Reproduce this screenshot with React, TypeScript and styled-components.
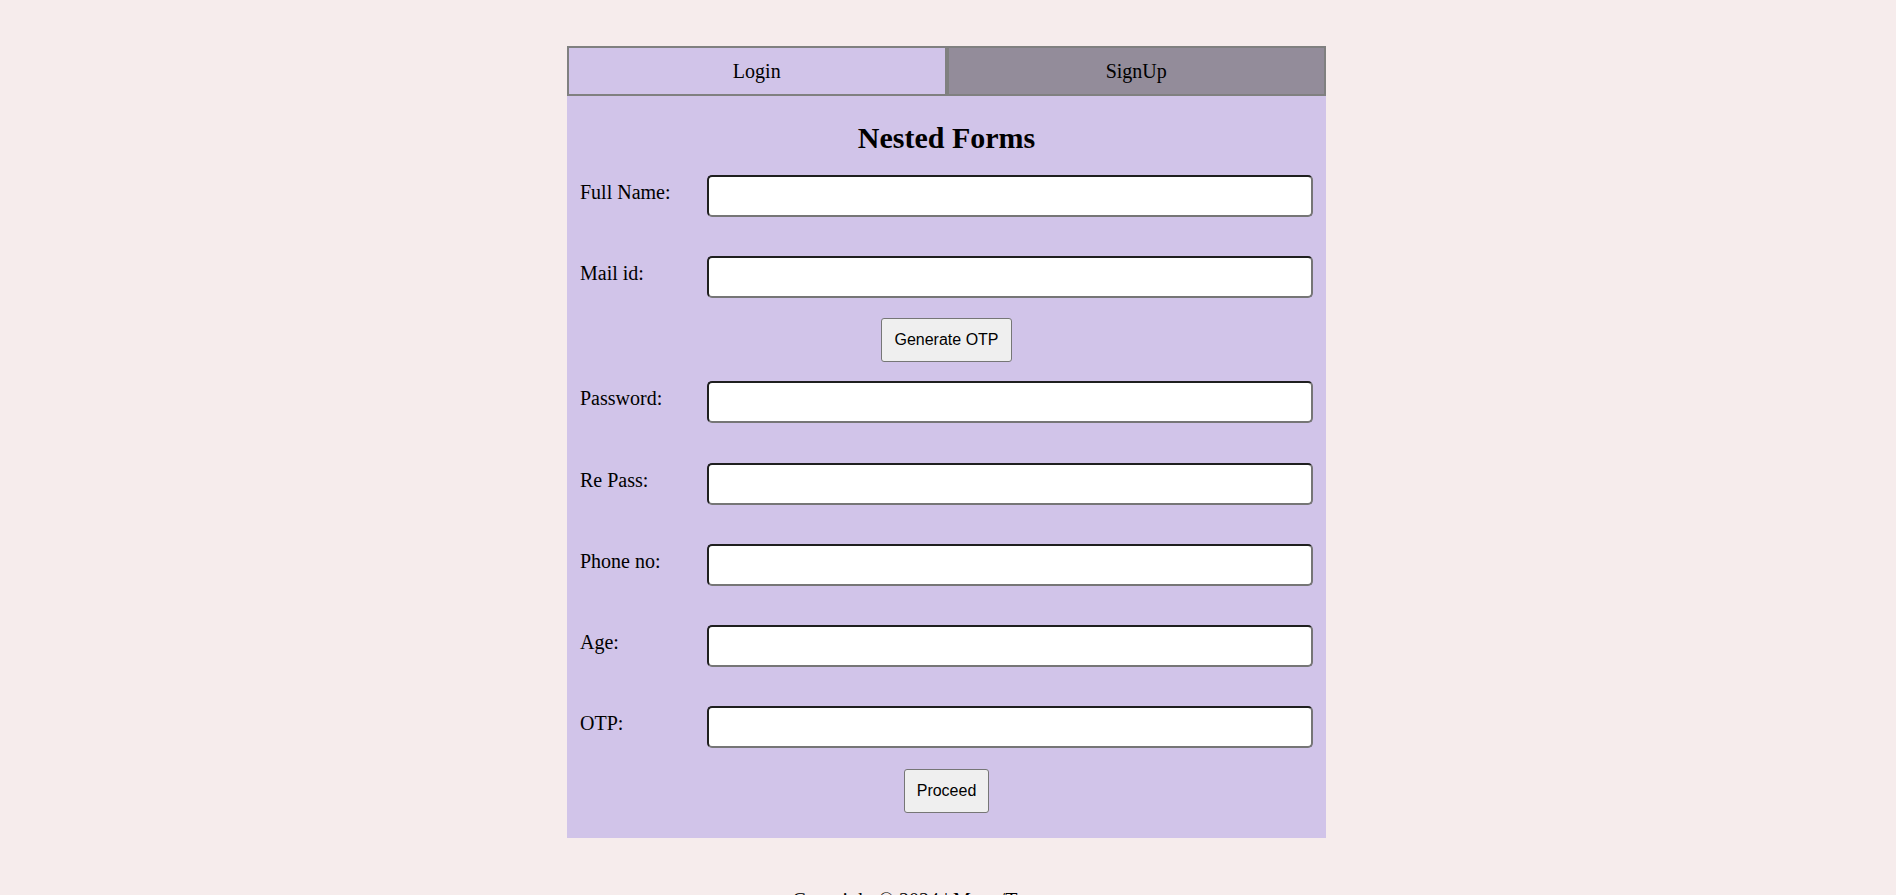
import React from "react";
import styled, { createGlobalStyle } from "styled-components";

const GlobalStyle = createGlobalStyle`
  html, body {
    margin: 0;
    padding: 0;
    background: #f6ecec;
    font-family: "Liberation Serif", "Times New Roman", serif;
    font-size: 20px;
    color: #000;
  }
`;

const Page = styled.div`
  display: flex;
  flex-direction: column;
  align-items: center;
  padding: 46px 3px 0 0;
  min-height: 849px;
`;

const Card = styled.div`
  width: 759px;
  background: #d1c4e9;
`;

const TabBar = styled.div`
  display: flex;
`;

const Tab = styled.button<{ $active?: boolean }>`
  flex: 1;
  height: 50px;
  box-sizing: border-box;
  border: 2px solid #808080;
  background: ${(p) => (p.$active ? "#d1c4e9" : "#938c9a")};
  font-family: "Liberation Serif", "Times New Roman", serif;
  font-size: 20px;
  color: #000;
  padding: 0;
  cursor: pointer;
`;

const Form = styled.form`
  display: flex;
  flex-direction: column;
  padding: 0 13px 25px;
`;

const Title = styled.h2`
  margin: 25px 0 19.5px;
  font-size: 30px;
  font-weight: bold;
  text-align: center;
  line-height: normal;
`;

const Row = styled.div<{ $after: number }>`
  display: flex;
  align-items: flex-start;
  margin-bottom: ${(p) => p.$after}px;
`;

const Label = styled.label`
  flex: none;
  width: 127px;
  margin-top: 6px;
  line-height: 23px;
`;

const Input = styled.input`
  flex: 1;
  min-width: 0;
  height: 42px;
  box-sizing: border-box;
  border-width: 2px;
  border-style: solid;
  border-color: #1f1f1f #767676 #767676 #1f1f1f;
  border-radius: 5px;
  background: #fff;
  padding: 0 8px;
  font-size: 16px;
`;

const ButtonRow = styled.div<{ $after: number }>`
  display: flex;
  justify-content: center;
  margin-bottom: ${(p) => p.$after}px;
`;

const Button = styled.button`
  font-family: "Liberation Sans", Arial, sans-serif;
  font-size: 16px;
  line-height: normal;
  padding: 12px;
  background: #efefef;
  color: #000;
  border: 1px solid #767676;
  border-radius: 3px;
  cursor: pointer;
`;

const Footer = styled.footer`
  margin-top: 51px;
  text-align: center;
  line-height: 23px;
`;

const Field = ({ label, after, type = "text" }: { label: string; after: number; type?: string }) => (
  <Row $after={after}>
    <Label>{label}</Label>
    <Input type={type} />
  </Row>
);

export default function App() {
  return (
    <>
      <GlobalStyle />
      <Page>
        <Card>
          <TabBar>
            <Tab $active>Login</Tab>
            <Tab>SignUp</Tab>
          </TabBar>
          <Form onSubmit={(e) => e.preventDefault()}>
            <Title>Nested Forms</Title>
            <Field label="Full Name:" after={39.3} />
            <Field label="Mail id:" after={20} type="email" />
            <ButtonRow $after={19.5}>
              <Button type="button">Generate OTP</Button>
            </ButtonRow>
            <Field label="Password:" after={39.3} type="password" />
            <Field label="Re Pass:" after={39.3} type="password" />
            <Field label="Phone no:" after={39.3} />
            <Field label="Age:" after={39.3} />
            <Field label="OTP:" after={20.5} />
            <ButtonRow $after={0}>
              <Button type="submit">Proceed</Button>
            </ButtonRow>
          </Form>
        </Card>
        <Footer>Copyright © 2024 | Manu/Tanmayram</Footer>
      </Page>
    </>
  );
}
